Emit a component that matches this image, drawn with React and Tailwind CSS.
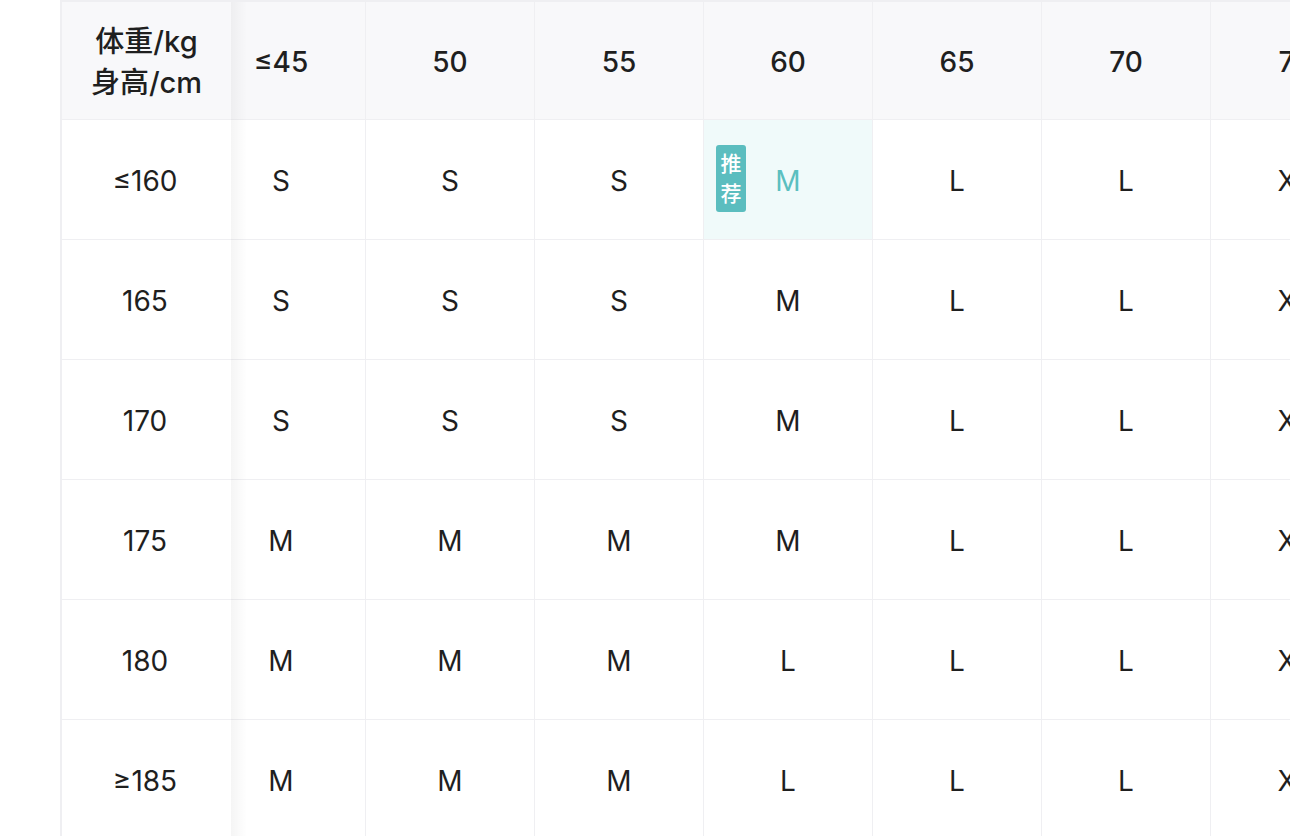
import React from 'react';

const weights = ['≤45', '50', '55', '60', '65', '70', '75', '80'];

const rows = [
  { h: '≤160', sizes: ['S', 'S', 'S', 'M', 'L', 'L', 'XL', 'XL'], rec: 3 },
  { h: '165', sizes: ['S', 'S', 'S', 'M', 'L', 'L', 'XL', 'XL'] },
  { h: '170', sizes: ['S', 'S', 'S', 'M', 'L', 'L', 'XL', 'XL'] },
  { h: '175', sizes: ['M', 'M', 'M', 'M', 'L', 'L', 'XL', 'XL'] },
  { h: '180', sizes: ['M', 'M', 'M', 'L', 'L', 'L', 'XL', 'XL'] },
  { h: '≥185', sizes: ['M', 'M', 'M', 'L', 'L', 'L', 'XL', 'XL'] },
];

const font = { fontFamily: 'Inter, "Noto Sans CJK SC", sans-serif' };

const App = () => {
  return (
    <div className="w-[1290px] h-[836px] bg-white overflow-hidden pl-[60px]" style={font}>
      <div className="flex border-l-2 border-t-2 border-[#efeff2] h-full">
        {/* Fixed column - height labels */}
        <div className="relative z-10 w-[169px] shrink-0 bg-white">
          <div className="h-[118px] bg-[#f8f8fa] border-b border-[#efeff2] flex flex-col items-center justify-center pt-[2px] text-[29px] leading-[41px] font-medium text-[#1f1f1f]">
            <span>体重/kg</span>
            <span>身高/cm</span>
          </div>
          {rows.map((r) => (
            <div
              key={r.h}
              className="h-[120px] border-b border-[#efeff2] flex items-center justify-center pt-[2px] pr-[3px] text-[28px] text-[#1f1f1f]"
            >
              {r.h}
            </div>
          ))}
          {/* sticky shadow */}
          <div className="absolute top-0 bottom-0 -right-[16px] w-[16px] bg-gradient-to-r from-black/[0.04] to-transparent" />
        </div>

        {/* Scrolled columns */}
        <div className="flex-1 overflow-hidden">
          <div className="flex -ml-[34px]">
            {weights.map((w, ci) => (
              <div key={w} className="w-[169px] shrink-0 border-r border-[#efeff2]">
                <div className="h-[118px] bg-[#f8f8fa] border-b border-[#efeff2] flex items-center justify-center pt-[2px] text-[28px] font-medium text-[#1f1f1f]">
                  {w}
                </div>
                {rows.map((r) =>
                  r.rec === ci ? (
                    <div
                      key={r.h}
                      className="relative h-[120px] border-b border-[#efeff2] bg-[#f0fafa] flex items-center justify-center pt-[2px] text-[28px] text-[#5bbfc0]"
                    >
                      <span className="absolute left-[12px] top-[25px] w-[30px] h-[67px] rounded-[3px] bg-[#5bbdbf] text-white text-[21px] leading-[30px] font-medium flex flex-col items-center justify-center">
                        <span>推</span>
                        <span>荐</span>
                      </span>
                      {r.sizes[ci]}
                    </div>
                  ) : (
                    <div
                      key={r.h}
                      className="h-[120px] border-b border-[#efeff2] flex items-center justify-center pt-[2px] text-[28px] text-[#1f1f1f]"
                    >
                      {r.sizes[ci]}
                    </div>
                  )
                )}
              </div>
            ))}
          </div>
        </div>
      </div>
    </div>
  );
};

export default App;
